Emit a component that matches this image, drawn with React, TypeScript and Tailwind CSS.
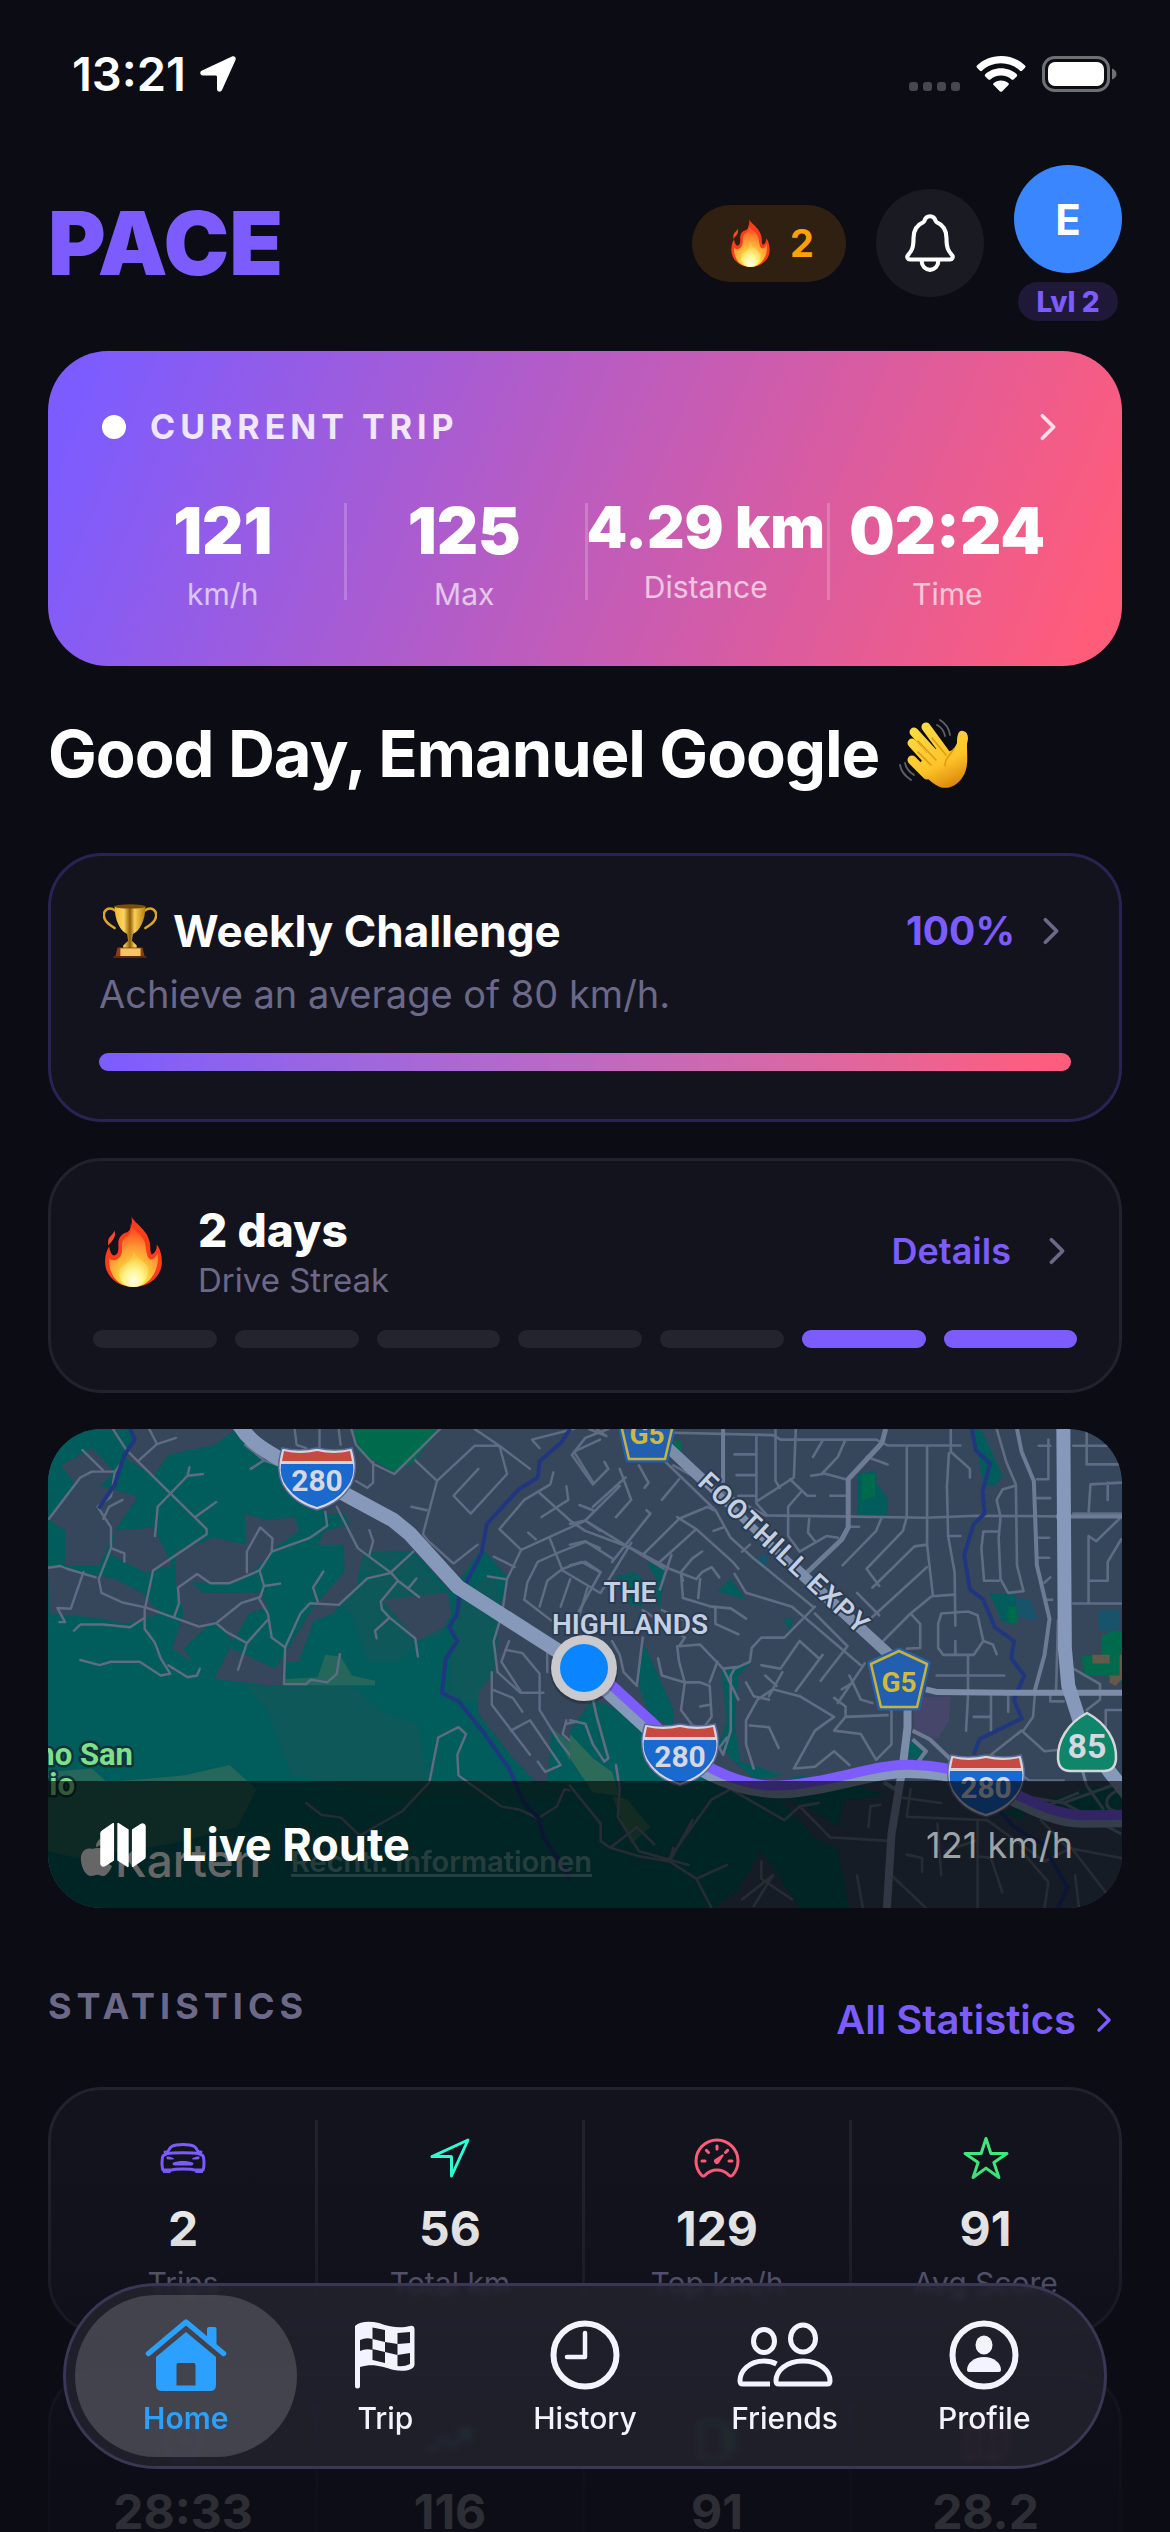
import React from "react";
import {
  IoNotificationsOutline,
  IoCarSportOutline,
  IoNavigateOutline,
  IoSpeedometerOutline,
  IoStarOutline,
  IoMap,
  IoMapOutline,
  IoChevronForward,
  IoTimeOutline,
  IoTrendingUpOutline,
  IoAlbumsOutline,
} from "react-icons/io5";

type IconProps = { className?: string };

function Fire({ className }: IconProps) {
  return (
    <svg viewBox="0 0 56 70" className={className} role="img" aria-label="Fire">
      <defs>
        <radialGradient id="fireBody" cx="0.5" cy="0.95" r="0.95">
          <stop offset="0" stopColor="#fff9b0" />
          <stop offset="0.28" stopColor="#ffd93b" />
          <stop offset="0.6" stopColor="#ff9a36" />
          <stop offset="0.85" stopColor="#ff5a22" />
          <stop offset="1" stopColor="#f5401f" />
        </radialGradient>
        <radialGradient id="fireCore" cx="0.5" cy="0.85" r="0.7">
          <stop offset="0" stopColor="#ffffe6" />
          <stop offset="0.5" stopColor="#fff48a" />
          <stop offset="1" stopColor="#ffc43a" />
        </radialGradient>
      </defs>
      <path d="M26 0C27 6 42 13 44 26C45 31 44 35 46 38C50 36 51 32 51 28C54 32 56 38 56 45C56 60 43 70 28 70C13 70 0 60 0 45C0 38 2 33 4 30C5 35 6 38 9 39C14 37 13 32 13 27C13 22 16 17 22 16C26 13 27 6 26 0Z" fill="#fb3d1c" />
      <path d="M25 8C28 15 39 19 40 30C41 38 42 43 46 43C49 42 51 39 52 36C54 56 42 70 28 70C14 70 3 59 4 42C7 45 12 44 15 40C19 34 14 26 20 21C25 20 26 14 25 8Z" fill="url(#fireBody)" />
      <path d="M28 34C30 41 38 44 42 50C45 57 38 70 28 70C18 70 11 60 15 51C20 48 28 43 28 34Z" fill="url(#fireCore)" />
      <path d="M3 25C3 20 9 18 9 14C11 19 9 23 3 29Z" fill="#fb4a25" />
    </svg>
  );
}

function Trophy({ className }: IconProps) {
  return (
    <svg viewBox="0 0 56 56" className={className} role="img" aria-label="Trophy">
      <defs>
        <linearGradient id="gold" x1="0" x2="1" y1="0" y2="0">
          <stop offset="0" stopColor="#f2b62b" />
          <stop offset="0.3" stopColor="#fbd65f" />
          <stop offset="0.5" stopColor="#8f5e07" />
          <stop offset="0.65" stopColor="#f8cf55" />
          <stop offset="1" stopColor="#b97c0d" />
        </linearGradient>
      </defs>
      <path d="M13 7C6 2 0 6 1 13C2 20 8 22 12 25M43 7C50 2 56 6 55 13C54 20 48 22 44 25" fill="none" stroke="#dda52b" strokeWidth="2.6" strokeLinecap="round" />
      <path d="M12 2H44C44 17 38 28 31 31L30 38L35 43V46H21V43L26 38L25 31C18 28 12 17 12 2Z" fill="url(#gold)" />
      <ellipse cx="28" cy="2.5" rx="16" ry="2.2" fill="#7a4e06" />
      <path d="M15 45H41L43 54H13Z" fill="#8a3c12" />
      <rect x="18" y="46" width="21" height="8" fill="#f4c465" />
      <path d="M11 54H45V56H11Z" fill="#5d250a" />
    </svg>
  );
}

function Wave({ className }: IconProps) {
  return (
    <svg viewBox="0 0 70 70" className={className} role="img" aria-label="Waving hand">
      <defs>
        <linearGradient id="skin" gradientUnits="userSpaceOnUse" x1="20" x2="50" y1="5" y2="68">
          <stop offset="0" stopColor="#ffdc45" />
          <stop offset="0.65" stopColor="#fdc42a" />
          <stop offset="1" stopColor="#dd890c" />
        </linearGradient>
      </defs>
      <g fill="none" stroke="url(#skin)" strokeWidth="9" strokeLinecap="round">
        <path d="M13 24L33 46" />
        <path d="M13 41L28 56" />
        <path d="M15 13L36 36" />
        <path d="M27 8L46 34" />
      </g>
      <path d="M30 30L45 30C51 35 55 31 58 24C58 15 60 11 64 12C69 13 70 18 68 25C68 39 70 49 63 59C57 68 46 72 37 66C28 60 20 52 20 46Z" fill="url(#skin)" />
      <path d="M19 22L37 41M19 33L32 46M33 19L47 36M55 30C50 37 46 40 46 47" fill="none" stroke="#e29a12" strokeWidth="1.6" strokeLinecap="round" />
      <path d="M41 1C46 4 50 9 51 16M38 6C42 8 45 12 46 17M1 46C2 52 6 57 12 61M6 44C7 49 10 53 15 56" fill="none" stroke="#606066" strokeWidth="1.8" strokeLinecap="round" />
    </svg>
  );
}

function StatusBar() {
  return (
    <div className="mt-[46px] flex h-14 items-center justify-between pr-1 pl-6">
      <div className="flex items-center gap-[14px]">
        <span className="text-[47px] leading-14 font-semibold">13:21</span>
        <svg viewBox="0 0 36 36" className="size-9" fill="white" aria-hidden="true">
          <path d="M32 0.5C34.500 -0.500 36.500 1.500 35.500 4L22 34C20.800 36.800 17 36 17 33V21C17 20 16.500 19.500 15.500 19.500H3C0 19.500 -0.800 15.800 2 14.500Z" />
        </svg>
      </div>
      <div className="flex items-center gap-4">
        <div className="mt-6 flex gap-[5px]">
          {[0, 1, 2, 3].map((i) => (
            <span key={i} className="h-[9px] w-[9px] rounded-[3px] bg-[#47474d]" />
          ))}
        </div>
        <svg viewBox="0 0 50 36" className="h-9 w-[50px]" fill="white" aria-hidden="true">
          <path d="M25 0C34.500 0 43 3.600 49 9.500C49.700 10.200 49.700 11 49 11.700L46 14.700C45.400 15.300 44.600 15.300 44 14.700C39 10 32.500 7.200 25 7.200C17.500 7.200 11 10 6 14.700C5.400 15.300 4.600 15.300 4 14.700L1 11.700C0.300 11 0.300 10.200 1 9.500C7 3.600 15.500 0 25 0Z" />
          <path d="M25 12.300C31.200 12.300 36.600 14.600 40.700 18.200C41.400 18.900 41.400 19.700 40.700 20.400L37.600 23.400C37 24 36.300 24 35.600 23.500C32.800 21 29.200 19.500 25 19.500C20.800 19.500 17.200 21 14.400 23.500C13.700 24 13 24 12.400 23.400L9.300 20.400C8.600 19.700 8.600 18.900 9.300 18.200C13.400 14.600 18.800 12.300 25 12.300Z" />
          <path d="M25 24.500C28 24.500 30.500 25.500 32.300 27C33 27.700 33 28.500 32.400 29.100L26 35.400C25.400 36 24.600 36 24 35.400L17.600 29.100C17 28.500 17 27.700 17.700 27C19.500 25.500 22 24.500 25 24.500Z" />
        </svg>
        <svg viewBox="0 0 76 36" className="h-9 w-[76px]" aria-hidden="true">
          <rect x="1.500" y="1.500" width="65" height="33" rx="11" fill="none" stroke="#6f6f74" strokeWidth="3" />
          <rect x="6" y="6" width="56" height="24" rx="7" fill="white" />
          <path d="M70 12.500C73 13.500 74.500 15.500 74.500 18C74.500 20.500 73 22.500 70 23.500Z" fill="#6f6f74" />
        </svg>
      </div>
    </div>
  );
}

function Header() {
  return (
    <header className="mt-[63px] flex items-center justify-between">
      <h1 className="text-[88px] leading-none font-black text-[#7c5cff]">PACE</h1>
      <div className="flex items-center gap-[30px]">
        <button className="flex h-[77px] items-center gap-5 rounded-full bg-[#302012] pr-8 pl-[39px] text-[38px] font-bold text-[#ff9f0a]">
          <Fire className="h-12 w-[39px]" />2
        </button>
        <button aria-label="Notifications" className="flex size-[108px] items-center justify-center rounded-full bg-[#1a1a22]">
          <IoNotificationsOutline className="size-[66px]" />
        </button>
        <div className="flex flex-col items-center gap-[9px]">
          <button className="flex size-[108px] items-center justify-center rounded-full bg-[#3a86ff] text-[42px] font-bold">E</button>
          <span className="flex h-[39px] items-center rounded-full bg-[#1f1838] px-[18px] text-[28px] font-extrabold whitespace-nowrap text-[#7c5cff]">Lvl 2</span>
        </div>
      </div>
    </header>
  );
}

const tripStats = [
  { value: "121", label: "km/h" },
  { value: "125", label: "Max" },
  { value: "4.29 km", label: "Distance", small: true },
  { value: "02:24", label: "Time" },
];

function CurrentTrip() {
  return (
    <section className="mt-[30px] rounded-[60px] bg-[linear-gradient(112deg,#7c5cff_4%,#ff5c7a_96%)] p-[54px]">
      <div className="flex h-[43px] items-center">
        <span className="size-6 rounded-full bg-white" />
        <h2 className="ml-6 text-[34px] font-bold tracking-[5px] text-white/85">CURRENT TRIP</h2>
        <IoChevronForward className="ml-auto size-10 text-white/80" />
      </div>
      <div className="mt-[45px] grid grid-cols-4">
        {tripStats.map((s, i) => (
          <div key={s.label} className="relative flex flex-col items-center">
            {i > 0 && <span className="absolute top-[10px] left-0 h-[97px] w-[3px] bg-white/20" />}
            <span
              className={
                s.small
                  ? "text-[58px] leading-[69px] font-black whitespace-nowrap"
                  : "text-[64px] leading-[76px] font-black whitespace-nowrap"
              }
            >
              {s.value}
            </span>
            <span className="mt-[7px] text-[30px] leading-9 text-white/65">{s.label}</span>
          </div>
        ))}
      </div>
    </section>
  );
}

function WeeklyChallenge() {
  return (
    <section className="mt-[60px] rounded-[54px] border-[3px] border-[#2a2253] bg-[#13131e] p-12">
      <div className="flex h-[54px] items-center pl-1">
        <Trophy className="size-[54px]" />
        <h3 className="ml-4 text-[44px] font-bold">Weekly Challenge</h3>
        <span className="ml-auto text-[39px] font-bold text-[#7c5cff]">100%</span>
        <IoChevronForward className="ml-4 size-10 text-[#6b6888]" />
      </div>
      <p className="mt-3 text-[38px] leading-12 text-[#6b6888]">Achieve an average of 80 km/h.</p>
      <div
        role="progressbar"
        aria-valuenow={100}
        aria-label="Weekly Challenge"
        className="mt-[35px] h-[18px] rounded-full bg-linear-to-r from-[#7c5cff] to-[#ff5c7a]"
      />
    </section>
  );
}

const streak = [false, false, false, false, false, true, true];

function DriveStreak() {
  return (
    <section className="mt-9 rounded-[54px] border-[3px] border-[#22222c] bg-[#13131e] p-[42px]">
      <div className="flex items-center px-[12px]">
        <Fire className="h-[71px] w-[57px]" />
        <div className="ml-9">
          <h3 className="text-[46px] leading-[54px] font-extrabold">2 days</h3>
          <p className="mt-1 text-[33px] leading-[38px] text-[#6b6888]">Drive Streak</p>
        </div>
        <a href="#details" className="ml-auto flex items-center gap-[26px] text-[36px] font-semibold text-[#7c5cff]">
          Details
          <IoChevronForward className="-mr-[12px] size-10 text-[#6b6888]" />
        </a>
      </div>
      <div className="mt-[31px] flex gap-[18px]">
        {streak.map((on, i) => (
          <span
            key={i}
            className={
              on
                ? "h-[18px] flex-1 rounded-full bg-[#7c5cff] last:w-[133px] last:flex-none"
                : "h-[18px] flex-1 rounded-full bg-[#24242e]"
            }
          />
        ))}
      </div>
    </section>
  );
}

function Interstate({ x, y }: { x: number; y: number }) {
  return (
    <g transform={`translate(${x} ${y})`}>
      <path d="M-35 -31Q-18 -27 0 -31Q18 -27 35 -31Q42 -10 34 6Q24 24 0 31Q-24 24 -34 6Q-42 -10 -35 -31Z" fill="#d5d5da" stroke="#5a6a9e" strokeWidth="1.500" />
      <path d="M-33 -28Q-17 -24 0 -28Q17 -24 33 -28L35 -18H-35Z" fill="#c74a42" />
      <path d="M-36 -15H36Q38 -2 30 8Q20 22 0 28Q-20 22 -30 8Q-38 -2 -36 -15Z" fill="#1a69cf" />
      <text y="12" textAnchor="middle" fontSize="30" fontWeight="700" fill="#d5d8e0" fontFamily="Roboto, sans-serif">280</text>
    </g>
  );
}

function CountyShield({ x, y }: { x: number; y: number }) {
  return (
    <g transform={`translate(${x} ${y})`}>
      <path d="M0 -30L29 -17L19 28H-19L-29 -17Z" fill="#235fb0" stroke="#235fb0" strokeWidth="5" strokeLinejoin="round" />
      <path d="M0 -29L28 -16L18 27H-18L-28 -16Z" fill="none" stroke="#c9b23a" strokeWidth="2.500" strokeLinejoin="round" />
      <text y="12" textAnchor="middle" fontSize="28" fontWeight="700" fill="#d0b93c" fontFamily="Roboto, sans-serif">G5</text>
    </g>
  );
}

function RouteMap() {
  return (
    <svg viewBox="0 0 1074 479" preserveAspectRatio="xMidYMid slice" className="absolute inset-0 size-full" role="img" aria-label="Map of the current route">
      <rect width="1074" height="479" fill="#36475c" />
      {/* West side: parkland with residential pockets */}
      <g transform="translate(-48 -29) scale(0.3827 0.3444)">
        <path d="M100 60H600L740 180V260L860 330H900L940 420L1080 440L1180 560L1210 510L1260 430L1330 520L1290 650V790L1250 850V910L1350 1050L1400 1110H1430L1440 960L1480 990L1568 1080V1500H100Z" fill="#005d5b" />
        <path d="M880 330L940 430L1080 450L1170 570L1160 680L1090 700L1040 760H960L920 620L850 580L960 510L900 470Z M1190 580L1290 500L1310 600L1290 800L1250 880L1170 860L1180 760Z M640 830H920L1000 910L1090 940L1120 1100L1560 1110V1160L1000 1150L760 1090L700 900Z" fill="#0f5859" />
        <path d="M125 480L300 520L370 560L420 620L330 650L240 630L130 620Z M350 84H620L560 130L440 160L400 220L330 170Z M160 190L240 140L300 210L260 250L360 280L300 380L260 480L170 480L170 380L125 345L200 250Z M300 380L400 370L450 480L380 500L290 450Z M460 440L560 400L640 420L640 330L700 350L770 340L780 380L720 430L660 500L620 530H500L530 560H680L700 600L650 620L600 720L720 780L820 600L900 500L900 420H830L850 380L960 350L960 310L880 300L740 260L740 200L700 84H920L940 200L1060 210L1150 84H1230L1400 180L1290 320L1240 450L1190 540L1090 440L950 440L930 540L870 620L820 640L780 760H740V828H700L560 810L610 700L560 640L480 720L500 760L450 720L480 620L460 540Z M1170 560L1180 620L1160 660L1090 700L1000 580Z M1250 850L1300 780L1440 790L1500 930L1440 960L1400 880L1410 1110L1340 1040L1250 910Z" fill="#36475c" />
        <path d="M920 84L935 150L1030 210L1080 180L1150 84Z" fill="#006a4c" />
        <path d="M480 1090L560 1070L600 1060L670 1130L620 1240L440 1290L200 1330L125 1310V1080L240 1070L280 1110Z M745 810L830 805L850 740L890 745L920 800L980 815V828H745Z M1440 950L1568 1070V1140L1520 1110Z" fill="#25675a" />
        <g fill="none" stroke="#5f6c82" strokeWidth="2.400" vectorEffect="non-scaling-stroke" strokeLinejoin="round" strokeLinecap="round">
          {[
            "M295 84L330 145L540 375V390L400 495L378 610V665L405 705L420 750L445 795L420 800L365 760H290L260 770L210 755",
            "M390 84L410 128L360 178M410 128L460 110M215 145L270 205",
            "M128 345L210 225L240 208H300L320 180M300 208L290 280L255 310L290 370V430L258 520L265 560L320 588L380 602L520 658L565 648L630 590L680 572L690 540L678 495L710 440L810 400L855 365L850 325",
            "M290 430L325 445V470M270 345L285 310L320 290M125 487L158 482L175 490L250 515M218 500L185 606L150 604L170 645H155",
            "M378 632L340 660L270 652H210L193 670M440 770L490 805L515 800L522 780M405 395L412 310L490 220L495 195M490 220L530 215M510 340L565 296",
            "M565 648L590 672L645 706L702 635M645 706L622 783M676 575L700 620L710 690L745 718L742 825H800L812 812L855 820L880 795L888 738",
            "M678 495L600 532H550L515 505L465 545L468 590L455 630M645 500V440L680 370L712 402L710 440M690 540L732 533",
            "M745 718L785 620L810 590L885 595L960 518L1022 502L935 430L880 310M830 585L818 545L845 498M965 378L975 410L965 450M1022 500L1080 440",
            "M1022 502L1040 525L1095 572M1040 525L995 585L998 608L1018 632L1085 692L1092 745M1018 632L980 670L984 692M1068 545L1088 518",
            "M800 1170L840 1205L890 1212L940 1265L1050 1195L1122 1110L1145 980L1198 950L1218 970L1195 1030L1198 1090L1310 1180L1360 1190L1405 1215L1455 1180L1475 1130L1510 1140L1568 1230",
            "M640 130L690 175L655 200M690 175L740 195M770 84L775 130L800 140M835 84V140M885 84L890 130",
            "M918 84L930 130L975 185L1030 215L1150 84M930 235L960 255L975 240V180",
            "M1085 175L1142 235L1105 390L1120 410L1185 475L1248 420M1142 235L1240 133H1305L1385 200M1240 84L1305 133L1325 215L1230 330L1185 278L1250 200M1075 310L1115 320",
            "M1500 84L1390 115L1410 140M1568 115L1500 150L1550 240M1446 210L1438 245L1370 290L1305 375L1362 435L1325 520L1312 620L1290 700L1300 790L1360 850H1420",
            "M1362 435L1435 398L1530 350L1568 380M1410 270L1500 360M1435 398L1470 495L1568 560M1370 580L1378 530L1405 470L1455 445L1530 412L1568 430M1410 600L1430 525L1470 490L1520 470L1568 500",
            "M1490 520L1465 600M1535 545L1510 640M1370 580L1440 640M1480 250L1485 290L1415 340M1275 512L1320 520M1290 455L1345 485M1380 385L1400 405",
            "M1285 840L1340 865L1365 905M1285 790V885L1385 1030M1335 960L1385 930L1465 1060L1425 1080L1405 1050M1320 725L1365 735L1410 795V900L1460 990L1510 1060M1330 700L1310 760L1360 845M1430 735V790",
            "M1480 930L1470 970L1510 1010L1545 1045M1480 940L1525 930L1545 980V1030M1550 850L1560 930",
          ].map((d) => (
            <path key={d} d={d} vectorEffect="non-scaling-stroke" />
          ))}
        </g>
        <g fill="none" stroke="#20377f" strokeWidth="4" strokeLinejoin="round">
          <path d="M340 84L352 115L325 160L300 245L258 315" vectorEffect="non-scaling-stroke" />
          <path d="M1490 84L1465 125L1410 178L1405 225L1355 260L1272 360L1258 445L1200 570L1195 620L1173 660L1195 700L1165 750L1155 850L1198 875L1260 960L1330 1070L1370 1170L1408 1215L1420 1270L1480 1370L1530 1475" vectorEffect="non-scaling-stroke" />
        </g>
      </g>
      {/* East side: street grid */}
      <g transform="translate(522 -29) scale(0.3827 0.3444)">
        <path d="M0 960L60 870L240 950L390 1110L520 1120L600 1090L730 1110L830 1150L720 1160L700 1240L620 1180L550 1160L640 1270L700 1300L730 1475H600L500 1310L440 1420L380 1475H0Z M195 712L215 760L270 900V950L210 920L185 850L175 780Z M395 785L480 755L440 800L430 940L445 1050L560 1090L480 1100L420 1040L390 1000L410 930Z M750 215L800 205V240L830 285V335H750Z M385 555L420 520L460 580Z M200 470L250 490L235 600L215 590L225 520Z M555 635H585L575 670Z M1055 84H1075L1130 220L1110 250L1080 245Z M1095 560L1165 565V650L1130 645Z M120 510L170 500L200 530L190 600L140 590Z M865 1000L900 990L935 1040H870Z M1380 1120H1440V1250L1180 1140L1190 1220L1120 1200Z" fill="#005d5b" />
        <path d="M1390 685L1415 670L1443 672V820L1395 800H1345L1335 745L1390 740Z M1145 600H1168V650H1145Z M763 215H797V280L763 290Z M270 120H290V150H270Z" fill="#006a4c" />
        <path d="M895 862H995L990 930L960 985L900 960Z" fill="#46466a" />
        <path d="M1395 740H1410V820L1425 830L1443 810V740H1436V800H1410V765H1365V740Z" fill="#66594c" />
        <path d="M1165 575L1205 580L1220 640L1170 630Z M1380 610H1435V670H1380Z M485 460L510 445L520 465L500 490Z" fill="#17536b" />
        <path d="M0 970L60 1040L110 1080L130 1150L60 1140L0 1040Z M110 1150L150 1160L210 1240L160 1290Z" fill="#2d6b58" />
        <g fill="none" stroke="#5f6c82" strokeLinejoin="round" strokeLinecap="round" strokeWidth="2.600">
          {[
            "M270 95L530 102L550 115H800L830 132H1020M430 158H485M435 218H485M440 278H485M487 105V295L585 225L590 84M537 84V235L548 255M720 115L700 165L660 212L720 230",
            "M270 190L510 335L700 338L930 342L1060 336L1268 338M660 118L635 165M775 165L830 187M630 220L660 215M575 230L620 278H640M680 278H720",
            "M487 300L515 335M605 265L570 310V395L600 440L670 395L700 400M625 345L622 385L640 410M725 368H755M815 340L800 380L712 480M880 135V340L870 380L775 490L808 540M933 135V420L948 565M995 84V150L1045 200V225M990 155L985 250L988 395L1005 500L1007 655M988 395H1020",
            "M933 420L900 425L790 545M933 485L780 640M1005 565L945 570L890 620L800 720M750 560L808 625M890 620L915 650V720L880 722",
            "M970 620L1040 614L1065 625L1080 700L1055 740H975L962 720V650ZM1007 700V740M1080 700L1105 710L1115 738M1040 740V850M958 800H1135M1100 855V960M1055 920H1100M1040 860L1035 960M1145 855V905",
            "M1115 84L1140 180L1165 245L1168 480L1185 555L1145 560L1125 520L1120 400L1125 340L1115 290L1130 260L1160 250M1120 382H1080L1075 430L1082 525H1120M1220 285H1255M1225 400H1252M1225 458H1252M1220 230H1250V115M1225 133H1255M1315 133H1440M1350 84V187H1440M1440 240L1360 245L1355 330M1405 240V290M1440 330H1315M1315 591H1440M1355 590V395L1375 410L1440 340M1355 525H1405V470L1440 405M1240 530L1255 515M1245 580H1260",
            "M1315 780L1385 825V870L1350 900M1275 640L1270 850M1180 960L1100 1030L1130 1050L1200 1105H1290M1180 960L1240 1020L1290 1015M1215 850L1210 920L1185 960M1255 850V875H1290M1400 900H1440M1400 900V960",
            "M0 350L40 380L160 430L260 490L330 520L345 500L370 485L390 515M0 360L40 350L245 490M0 420L40 410L110 460M0 480L40 470L80 500L20 620M110 470L210 330L200 320M160 415L80 560M190 450L285 345L360 310L375 320M230 475L330 375L425 470L440 490M330 375L280 340",
            "M50 84L95 105L70 84M5 160L60 245L100 200L90 180M5 160L40 110L100 84M130 200L160 290L120 340M180 190L205 240L195 255M60 310L145 225M25 305L60 320M240 290L285 230M40 350L130 250",
            "M250 180L380 320L420 400L480 460L635 600M430 505L460 560L580 600L760 770M400 370L375 380M450 440L470 420M290 500L295 575L370 600L420 605L460 635M340 520L335 575M265 450L235 550M345 440L320 460L290 500L295 525M380 600V650L440 680M240 610L300 640L300 660M190 610L300 690L285 715L340 710L400 780L440 775",
            "M640 600L560 690L500 690L475 720L470 760L430 780L420 800V960L400 1030L390 1010L410 980M280 715L285 760L300 820L290 900L320 945L350 950L370 920L365 830L340 820H305M230 750L240 800L300 820M340 890L365 885M365 820L385 760",
            "M500 770L550 780L600 700M555 790L520 860M590 845L660 740M655 815L725 715M725 715L640 620M700 880L770 765M730 800L760 870L790 880M690 865L720 890V920L830 915M740 820L710 840M510 800L540 830M460 820L480 860L520 870M480 1070L460 1000V930L490 870L530 840L600 860L690 920L640 960L585 1070M585 1070L640 1065L690 1020L730 1060M470 945L520 950L545 1010M720 920L690 960L760 970L800 1045L840 1000V900M600 700L650 750",
            "M400 780L440 870M130 740L140 790L175 830M190 690L175 825M110 700L130 740M60 870L70 920L100 1040L90 1050L60 1000L40 940L0 930",
            "M0 1120L80 1230V1280L105 1300L175 1240L220 1290M105 1300L180 1325L260 1340L320 1220M260 1340L330 1390L370 1475M260 1340L270 1300M120 1060L130 1130L125 1210L180 1310L310 1350M330 1390L410 1350M260 1330L370 1160L420 1130L560 1220L600 1180L650 1170M600 1180L680 1270L760 1275L830 1280",
            "M870 1155L970 1170M890 1130L880 1210L1090 1220L1240 1340L1310 1300L1400 1430M780 1240L785 1180L810 1175M840 1380L930 1475M880 1320L920 1330V1370M960 1230L970 1380M1065 1220V1475M1065 1325L1100 1330L1130 1430M980 1310L1060 1280M750 1380L765 1475M1180 1310L1250 1400L1240 1475M1230 1220L1300 1300L1440 1330M500 1340V1390L580 1450M450 1450L530 1380L480 1470M1320 1380L1330 1475",
          ].map((d) => (
            <path key={d} d={d} vectorEffect="non-scaling-stroke" />
          ))}
        </g>
        <g fill="none" stroke="#6d7b93" strokeLinejoin="round">
          <path d="M825 84L815 125L727 230V370L710 405L620 500" strokeWidth="5" vectorEffect="non-scaling-stroke" />
          <path d="M1168 84L1180 150L1212 235L1220 480L1253 635L1240 740L1213 850" strokeWidth="4" vectorEffect="non-scaling-stroke" />
          <path d="M1270 338H1443M400 84V240" strokeWidth="4" vectorEffect="non-scaling-stroke" />
          <path d="M895 960L940 985L1010 1060M895 985L930 1020L910 1050M820 1110L850 1130L880 1080" strokeWidth="4" vectorEffect="non-scaling-stroke" />
          <path d="M1180 1150L1290 1170L1440 1260M1340 1080L1350 1120L1395 1190M1330 1140L1200 1200M1290 1170L1440 1110M1440 1200C1390 1190 1390 1150 1440 1130" strokeWidth="3" vectorEffect="non-scaling-stroke" />
        </g>
        <path d="M1050 84L1060 145L1098 185L1078 265L1083 330L1055 360L1030 450L1045 550L1080 580L1110 660L1160 700L1153 750L1187 800L1160 870L1180 925L1070 985L1055 1030M1120 1190L1160 1240L1235 1290L1300 1415L1275 1475" fill="none" stroke="#20377f" strokeWidth="4" vectorEffect="non-scaling-stroke" />
        <g fill="none" stroke="#7b8da8" strokeLinejoin="round">
          <path d="M220 100L350 235M590 490L840 745" strokeWidth="11" vectorEffect="non-scaling-stroke" />
          <path d="M350 235L590 490" strokeWidth="8" vectorEffect="non-scaling-stroke" />
          <path d="M930 840L960 848L1140 850H1443" strokeWidth="6" vectorEffect="non-scaling-stroke" />
          <path d="M882 890V950L870 1060L840 1260L828 1475" strokeWidth="8" vectorEffect="non-scaling-stroke" />
        </g>
        <g fill="none" stroke="#8699bb" strokeLinejoin="round">
          <path d="M1289 60L1293 720L1302 830L1340 960L1410 1080L1460 1150" strokeWidth="14" vectorEffect="non-scaling-stroke" />
          <path d="M30 778L190 940C300 1070 440 1140 560 1136C680 1130 800 1070 900 1078C1100 1080 1200 1220 1340 1222L1460 1220" strokeWidth="14" vectorEffect="non-scaling-stroke" />
        </g>
        <path d="M60 778L210 930C320 1060 440 1122 540 1120C680 1115 800 1052 900 1060C1100 1065 1200 1200 1340 1206L1460 1204" fill="none" stroke="#7c5cff" strokeWidth="10" vectorEffect="non-scaling-stroke" />
      </g>
      <path d="M186 -14C198 12 215 20 232 30L345 91L362 105L410 158L535 238" fill="none" stroke="#8699bb" strokeWidth="15" strokeLinejoin="round" />
      <Interstate x={269} y={50} />
      <Interstate x={632} y={326} />
      <Interstate x={938} y={357} />
      <CountyShield x={599} y={3} />
      <CountyShield x={851} y={251} />
      <path d="M1039 284C1058 294 1069 312 1068 330Q1067 342 1056 342H1022Q1011 342 1010 330C1009 312 1020 294 1039 284Z" fill="#0f8569" stroke="#d5d5da" strokeWidth="2.500" />
      <text x="1039" y="329" textAnchor="middle" fontSize="34" fontWeight="700" fill="#d5d8e0" fontFamily="Roboto, sans-serif">85</text>
      <g fontFamily="Roboto, sans-serif" paintOrder="stroke" strokeLinejoin="round">
        <g fill="#c3d0e2" stroke="#2b3a50" strokeWidth="4" textAnchor="middle" fontSize="28" fontWeight="600">
          <text x="582" y="173">THE</text>
          <text x="582" y="205">HIGHLANDS</text>
          <text x="0" y="0" fontSize="27" transform="translate(730 131) rotate(43)" letterSpacing="2">FOOTHILL EXPY</text>
        </g>
        <g fill="#7fe08a" stroke="#12333a" strokeWidth="5" textAnchor="end" fontSize="31" fontWeight="700">
          <text x="85" y="336">Rancho San</text>
          <text x="27" y="366">Antonio</text>
        </g>
      </g>
      <circle cx="536" cy="241" r="34" fill="#000" opacity="0.2" />
      <circle cx="536" cy="239" r="33" fill="#c9c9ce" />
      <circle cx="536" cy="239" r="24" fill="#0a84ff" />
      <path d="M57 421C52 418 48 419 44 420C37 418 32 424 33 432C34 440 38 447 43 447C46 447 48 445 51 446C54 447 56 448 59 445C61 443 63 440 64 437C57 434 57 426 62 423C60 421 59 421 57 421ZM48 418C48 413 51 410 55 408C56 413 53 417 48 418Z" fill="#ffffff" />
      <text x="67" y="448" fontSize="46" fontWeight="500" fill="#ffffff" fontFamily="Inter, sans-serif">Karten</text>
      <text x="243" y="443" fontSize="29" fontWeight="600" fill="#ffffff" fillOpacity="0.400" textDecoration="underline" fontFamily="Inter, sans-serif">Rechtl. Informationen</text>
    </svg>
  );
}

function LiveRoute() {
  return (
    <section className="relative mt-9 flex h-[479px] flex-col justify-end overflow-hidden rounded-[54px]">
      <RouteMap />
      <div className="relative flex h-[127px] items-center bg-black/60 px-[49px]">
        <IoMap className="size-[52px]" />
        <h3 className="ml-8 text-[45px] font-bold">Live Route</h3>
        <span className="ml-auto text-[36px] text-white/60">121 km/h</span>
      </div>
    </section>
  );
}

type Stat = { icon: React.ReactNode; value: string; label: string };

const statRows: Stat[][] = [
  [
    { icon: <IoCarSportOutline className="size-12 text-[#7c5cff]" />, value: "2", label: "Trips" },
    { icon: <IoNavigateOutline className="size-12 text-[#2effd5]" />, value: "56", label: "Total km" },
    { icon: <IoSpeedometerOutline className="size-12 text-[#ff5c7a]" />, value: "129", label: "Top km/h" },
    { icon: <IoStarOutline className="size-12 text-[#3eea7c]" />, value: "91", label: "Avg Score" },
  ],
  [
    { icon: <IoTimeOutline className="size-12 text-[#7c5cff]" />, value: "28:33", label: "Duration" },
    { icon: <IoTrendingUpOutline className="size-12 text-[#2effd5]" />, value: "116", label: "Avg km/h" },
    { icon: <IoAlbumsOutline className="size-12 rotate-90 text-[#3eea7c]" />, value: "91", label: "Best Score" },
    { icon: <IoMapOutline className="size-12 text-[#ff5c7a]" />, value: "28.2", label: "Longest" },
  ],
];

function Statistics() {
  return (
    <section className="mt-[76px]">
      <div className="mb-11 flex items-start justify-between">
        <h2 className="text-[36px] leading-11 font-bold tracking-[5px] text-[#6b6888]">STATISTICS</h2>
        <a href="#statistics" className="mt-[13px] flex items-center gap-[10px] text-[40px] leading-[46px] font-semibold text-[#7c5cff]">
          All Statistics
          <IoChevronForward className="size-9" />
        </a>
      </div>
      <div className="flex flex-col gap-9">
        {statRows.map((row, r) => (
          <div key={r} className="grid grid-cols-4 divide-x-[3px] divide-[#22222c] rounded-[54px] border-[3px] border-[#22222c] bg-[#13131e] py-[30px]">
            {row.map((s) => (
              <div key={s.label} className="flex flex-col items-center pt-[14px]">
                {s.icon}
                <span className="mt-[18px] text-[48px] leading-[58px] font-bold">{s.value}</span>
                <span className="mt-[7px] text-[30px] leading-9 text-[#6b6888]">{s.label}</span>
              </div>
            ))}
          </div>
        ))}
      </div>
    </section>
  );
}

function HomeIcon() {
  return (
    <svg viewBox="0 0 82 72" className="h-[72px] w-[82px]" fill="currentColor" aria-hidden="true">
      <path d="M62 24V10Q62 8 64 8H69.500Q71.500 8 71.500 10V31Z" />
      <path d="M3.500 34.500L41 3L78.500 34.500" fill="none" stroke="currentColor" strokeWidth="5.500" strokeLinecap="round" strokeLinejoin="round" />
      <path d="M41 13L71 38V66Q71 72 65 72H17Q11 72 11 66V38ZM33 44Q31.500 44 31.500 46V66.500H50.500V46Q50.500 44 49 44Z" fillRule="evenodd" />
    </svg>
  );
}

function FlagIcon() {
  return (
    <svg viewBox="0 0 62 68" className="h-[72px] w-[62px]" aria-hidden="true">
      <path d="M1 5C6 0 16 0 25 2C38 7 48 7 56 5Q60 4 60.500 8V44C60 49 50 51 40 49C28 46 20 42 6 46V65Q6 67.500 3.500 67.500Q1 67.500 1 65Z" fill="currentColor" />
      <g fill="#20202b">
        <path d="M18.500 6.500L31 9V21L18.500 18Z" />
        <path d="M43.500 12L56 11V22L43.500 23Z" />
        <path d="M6 19Q12 16 18.500 18V29Q12 27 6 30Z" />
        <path d="M31 21L43.500 23V34L31 31Z" />
        <path d="M18.500 28L31 31V42L18.500 39Z" />
        <path d="M43.500 34L56 32V43Q50 46 43.500 45Z" />
      </g>
    </svg>
  );
}

function HistoryIcon() {
  return (
    <svg viewBox="0 0 72 72" className="size-[72px]" fill="none" stroke="currentColor" aria-hidden="true">
      <circle cx="36" cy="36" r="31.500" strokeWidth="6" />
      <path d="M36 14V38H18" strokeWidth="4.500" strokeLinecap="round" strokeLinejoin="round" />
    </svg>
  );
}

function FriendsIcon() {
  return (
    <svg viewBox="0 0 96 72" className="h-[72px] w-24" fill="none" stroke="currentColor" strokeWidth="5" strokeLinejoin="round" aria-hidden="true">
      <ellipse cx="27" cy="22" rx="10.500" ry="11.500" />
      <ellipse cx="66" cy="19.500" rx="12.500" ry="13.500" />
      <path d="M66 42C83 42 93 52 93 62Q93 65 90 65H42Q39 65 39 62C39 52 49 42 66 42Z" />
      <path d="M39.500 45C36 43 32 42 27 42C12 42 3 52 3 62Q3 65 6 65H33" />
    </svg>
  );
}

function ProfileIcon() {
  return (
    <svg viewBox="0 0 72 72" className="size-[72px]" aria-hidden="true">
      <circle cx="36" cy="36" r="31.500" fill="none" stroke="currentColor" strokeWidth="6" />
      <ellipse cx="36" cy="26" rx="8.500" ry="9.500" fill="currentColor" />
      <path d="M36 38C46 38 53 44 53 51Q53 53 51 53H21Q19 53 19 51C19 44 26 38 36 38Z" fill="currentColor" />
    </svg>
  );
}

const tabs = [
  { label: "Trip", icon: <FlagIcon /> },
  { label: "History", icon: <HistoryIcon /> },
  { label: "Friends", icon: <FriendsIcon /> },
  { label: "Profile", icon: <ProfileIcon /> },
];

function TabBar() {
  return (
    <nav className="absolute inset-x-[63px] bottom-[63px] grid grid-cols-5 rounded-full border-[3px] border-[#3a3755] bg-[#252531]/75 px-5 py-[9px] text-[30px] leading-9 font-medium text-[#f3f2ff] backdrop-blur-[3px]">
      <button aria-current="page" className="-mx-[11px] flex flex-col items-center rounded-full bg-white/16 pt-6 pb-[21px] font-semibold text-[#2ba0ff]">
        <HomeIcon />
        <span className="mt-[9px]">Home</span>
      </button>
      {tabs.map((t) => (
        <button key={t.label} className="flex flex-col items-center pt-6 pb-[21px]">
          {t.icon}
          <span className="mt-[9px]">{t.label}</span>
        </button>
      ))}
    </nav>
  );
}

export default function App() {
  return (
    <div className="relative h-screen overflow-hidden bg-[#0b0c14] font-['Inter',sans-serif] text-white">
      <main className="px-12">
        <StatusBar />
        <Header />
        <CurrentTrip />
        <div className="mt-[49px] flex h-[78px] items-center gap-5">
          <h2 className="text-[65px] font-bold tracking-[-1px] whitespace-nowrap">Good Day, Emanuel Google</h2>
          <Wave className="size-[70px]" />
        </div>
        <WeeklyChallenge />
        <DriveStreak />
        <LiveRoute />
        <Statistics />
      </main>
      <div className="pointer-events-none absolute inset-x-0 bottom-0 h-[380px] bg-[linear-gradient(to_bottom,transparent,rgba(11,12,20,0.15)_25%,rgba(11,12,20,0.35)_37%,rgba(11,12,20,0.7)_72%,rgba(11,12,20,0.86)_90%)]" />
      <TabBar />
    </div>
  );
}
